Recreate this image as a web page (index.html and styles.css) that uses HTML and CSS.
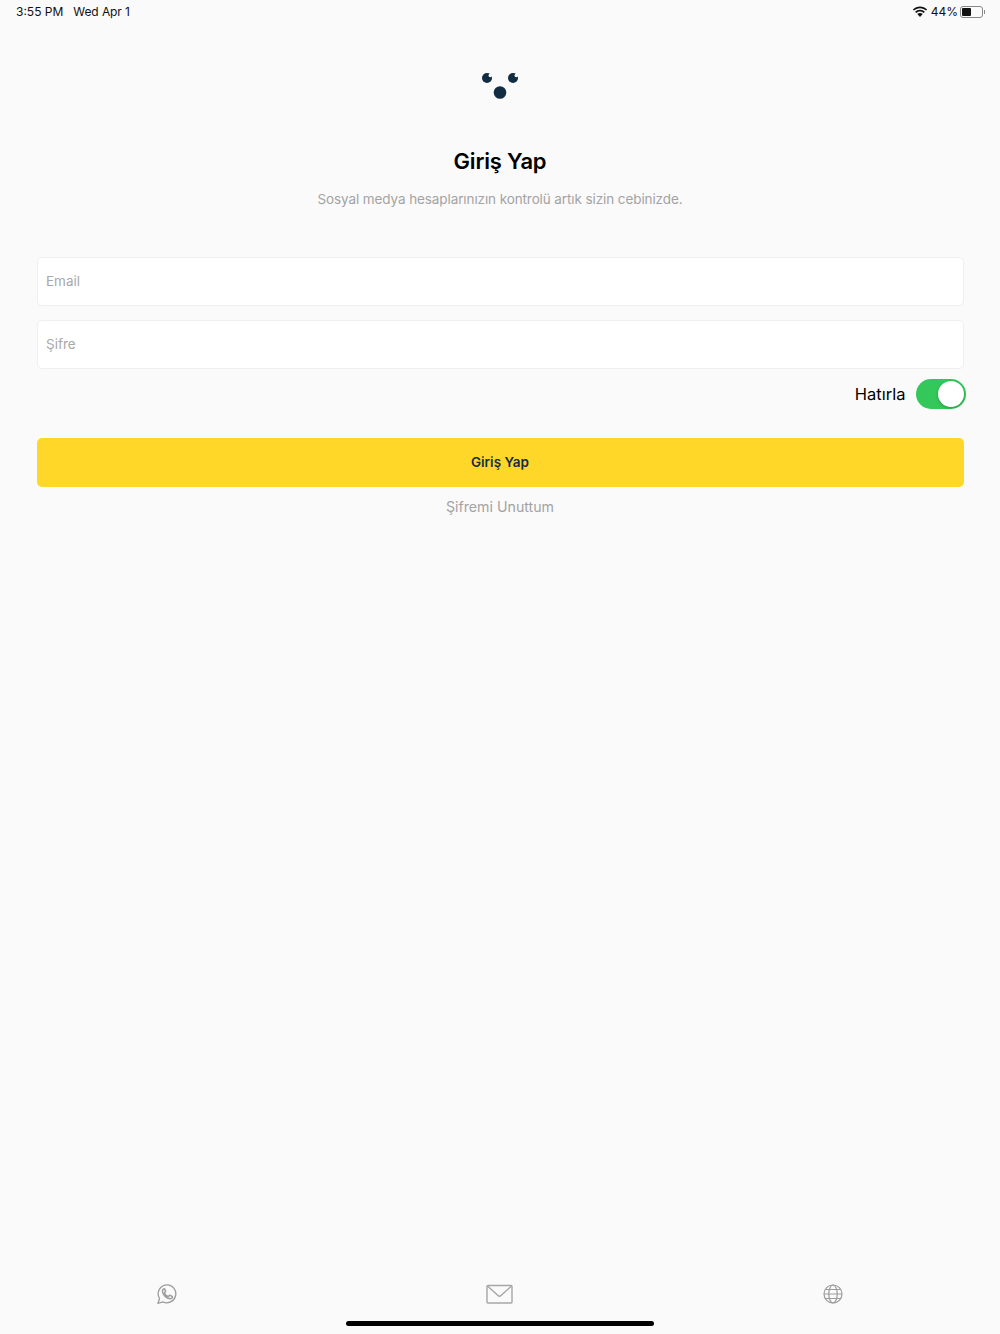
FILE: index.html
```html
<!DOCTYPE html>
<html lang="tr">
<head>
    <meta charset="UTF-8">
    <meta name="viewport" content="width=device-width, initial-scale=1.0">
    <title>Giriş Yap</title>
    <link rel="stylesheet" href="styles.css">
</head>
<body>

<div class="status-bar">
    <div class="status-left">
        <span>3:55 PM</span>
        <span>Wed Apr 1</span>
    </div>
    <div class="status-right">
        <svg class="wifi-icon" width="16" height="12" viewBox="0 0 16 12">
            <path d="M8 2.2c2.4 0 4.5.9 6.1 2.4l1-1.1C13.200 1.700 10.700.6 8 .6S2.800 1.700.9 3.500l1 1.100C3.500 3.100 5.600 2.200 8 2.200z" fill="#111"/>
            <path d="M8 5.400c1.500 0 2.800.6 3.800 1.500l1.100-1.100C11.600 4.600 9.900 3.800 8 3.800s-3.600.8-4.900 2l1.100 1.100c1-.9 2.300-1.500 3.800-1.500z" fill="#111"/>
            <path d="M8 7c-1.100 0-2 .4-2.700 1L8 11l2.700-3C10 7.400 9.100 7 8 7z" fill="#111"/>
        </svg>
        <span>44%</span>
        <div class="battery">
            <div class="battery-level"></div>
        </div>
        <div class="battery-tip"></div>
    </div>
</div>

<main class="login">
    <svg class="logo" width="38" height="28" viewBox="0 0 38 28">
        <circle cx="6" cy="6" r="5" fill="#122c44"/>
        <circle cx="9.300" cy="3.500" r="1.800" fill="#fafafa"/>
        <circle cx="32" cy="6" r="5" fill="#122c44"/>
        <circle cx="35.300" cy="3.500" r="1.800" fill="#fafafa"/>
        <circle cx="19" cy="20.500" r="6.300" fill="#122c44"/>
    </svg>

    <h1>Giriş Yap</h1>
    <p class="subtitle">Sosyal medya hesaplarınızın kontrolü artık sizin cebinizde.</p>

    <form class="login-form">
        <input type="email" placeholder="Email">
        <input type="password" placeholder="Şifre">

        <div class="remember">
            <span>Hatırla</span>
            <div class="switch">
                <div class="switch-knob"></div>
            </div>
        </div>

        <button type="button" class="login-button">Giriş Yap</button>
        <a href="#" class="forgot">Şifremi Unuttum</a>
    </form>
</main>

<footer class="footer">
    <div class="footer-icons">
        <div class="footer-icon">
            <svg width="22" height="22" viewBox="0 0 22 22" fill="none" stroke="#9c9c9c" stroke-width="1.300">
                <path d="M11.200 1.800a9 9 0 0 0-7.700 13.700L2 20.300l4.900-1.400a9 9 0 1 0 4.300-17.100z"/>
                <path d="M7.800 5.900c-.6.300-1.500 1.100-1.400 2.400.2 2 1.300 3.700 2.700 5.100 1.500 1.400 3.300 2.200 4.900 2.300 1.200 0 2.200-.8 2.400-1.500.1-.4 0-.7-.3-.9l-1.900-1c-.4-.2-.7-.1-.9.200l-.7.800c-.2.200-.4.200-.7.100-1.400-.6-2.700-1.800-3.300-3.200-.1-.3 0-.5.100-.7l.7-.8c.2-.2.200-.5.100-.8l-.8-1.900c-.2-.4-.5-.4-.9-.1z" stroke-width="1.500"/>
            </svg>
        </div>
        <div class="footer-icon">
            <svg width="27" height="20" viewBox="0 0 27 20" fill="none" stroke="#a6a6a6" stroke-width="1.400">
                <rect x="1" y="1.500" width="25" height="17.500" rx="1"/>
                <path d="M1.500 2L12 11.500c.9.800 2.100.8 3 0L25.500 2"/>
            </svg>
        </div>
        <div class="footer-icon">
            <svg width="20" height="20" viewBox="0 0 20 20" fill="none" stroke="#9c9c9c" stroke-width="1.200">
                <circle cx="10" cy="10" r="9"/>
                <ellipse cx="10" cy="10" rx="4.200" ry="9"/>
                <path d="M1 10h18M2.200 5.500h15.600M2.200 14.500h15.600"/>
            </svg>
        </div>
    </div>
    <div class="home-indicator"></div>
</footer>

</body>
</html>
```

FILE: styles.css
```css
body {
    font-family: Inter, "Liberation Sans", sans-serif;
    margin: 0;
    height: 1334px;
    display: flex;
    flex-direction: column;
    background-color: #fafafa;
    color: #000;
}

.status-bar {
    height: 23px;
    padding: 0 15px 0 16px;
    display: flex;
    justify-content: space-between;
    align-items: center;
    font-size: 12px;
    color: #111;
}

.status-left {
    display: flex;
    gap: 10px;
}

.status-left span:last-child {
    letter-spacing: -0.1px;
}

.status-right {
    display: flex;
    align-items: center;
}

.wifi-icon {
    margin-right: 3px;
}

.battery {
    width: 23px;
    height: 12px;
    margin-left: 2px;
    padding: 1px;
    box-sizing: border-box;
    border: 1px solid #888;
    border-radius: 3px;
}

.battery-level {
    width: 9px;
    height: 100%;
    background-color: #111;
    border-radius: 1px;
}

.battery-tip {
    width: 1px;
    height: 4px;
    margin-left: 1px;
    background-color: #888;
}

.login {
    flex: 1;
    display: flex;
    flex-direction: column;
    align-items: center;
    padding: 49px 36.5px 0;
}

.logo {
    display: block;
}

h1 {
    margin: 46px 0 0;
    font-size: 22px;
    font-weight: 600;
    line-height: 30px;
    letter-spacing: -0.2px;
}

.subtitle {
    margin: 13px 0 0;
    font-size: 13.5px;
    line-height: 20px;
    letter-spacing: -0.1px;
    color: #a3a3a3;
}

.login-form {
    align-self: stretch;
    margin-top: 48px;
    display: flex;
    flex-direction: column;
}

.login-form input {
    height: 49px;
    margin-bottom: 14px;
    padding: 0 9px 2px 8.5px;
    box-sizing: border-box;
    background-color: white;
    border: 1px solid #efefef;
    border-radius: 5px;
    font-family: inherit;
    font-size: 13.5px;
}

.login-form input::placeholder {
    color: #a8a8a8;
}

.remember {
    height: 30px;
    margin: -4px -2px 0 0;
    display: flex;
    justify-content: flex-end;
    align-items: center;
    gap: 10px;
    font-size: 16.5px;
}

.switch {
    width: 50px;
    height: 30px;
    padding: 2px;
    box-sizing: border-box;
    display: flex;
    justify-content: flex-end;
    background-color: #34c759;
    border-radius: 15px;
}

.switch-knob {
    width: 26px;
    height: 26px;
    background-color: white;
    border-radius: 50%;
    box-shadow: 0 1px 3px rgba(0, 0, 0, 0.25);
}

.login-button {
    height: 49px;
    margin-top: 29px;
    padding: 0 0 1px;
    background-color: #ffd729;
    border: none;
    border-radius: 5px;
    font-family: inherit;
    font-size: 13.5px;
    font-weight: 600;
    color: #122c44;
}

.forgot {
    margin-top: 10px;
    text-align: center;
    font-size: 14.2px;
    line-height: 20px;
    color: #a3a3a3;
    text-decoration: none;
}

.footer {
    display: flex;
    flex-direction: column;
    align-items: center;
}

.footer-icons {
    align-self: stretch;
    height: 22px;
    display: flex;
}

.footer-icon {
    flex: 1;
    display: flex;
    justify-content: center;
    align-items: center;
}

.home-indicator {
    width: 308px;
    height: 5px;
    margin: 16px 0 8px;
    background-color: #000;
    border-radius: 3px;
}
```
